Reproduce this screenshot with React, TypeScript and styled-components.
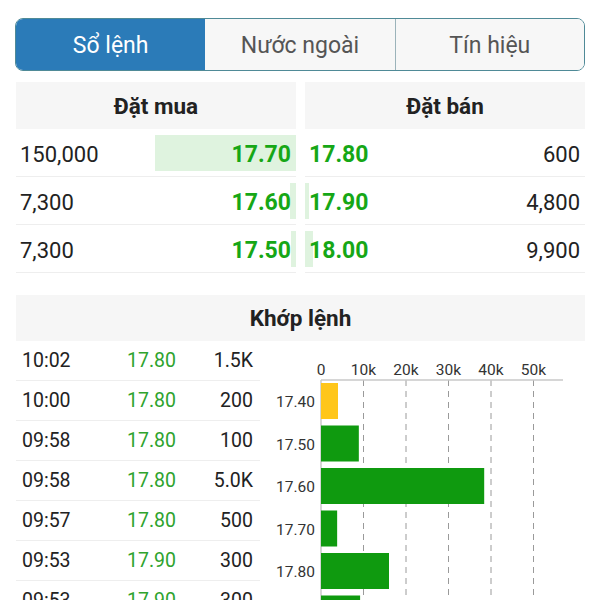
import React from 'react'
import styled, { createGlobalStyle } from 'styled-components'

const GlobalStyle = createGlobalStyle`
  body {
    margin: 0;
    background: #ffffff;
    font-family: Roboto, "Noto Sans", sans-serif;
    color: #222;
  }
`

const Page = styled.div`
  padding: 18px 15px 0 16px;
  display: flex;
  flex-direction: column;
`

const Tabs = styled.div`
  display: grid;
  grid-template-columns: repeat(3, 1fr);
  height: 53px;
  margin-left: -1px;
  border: 1.5px solid #4f8a97;
  border-radius: 8px;
  overflow: hidden;
  box-sizing: border-box;
`

const Tab = styled.div<{ $active?: boolean }>`
  display: flex;
  align-items: center;
  justify-content: center;
  padding-top: 2px;
  font-size: 23px;
  color: ${(p) => (p.$active ? '#ffffff' : '#555555')};
  background: ${(p) => (p.$active ? '#2b7bb8' : '#f7f7f7')};
  border-left: ${(p) => (p.$active ? 'none' : '1px solid #9bb3ba')};
  &:nth-child(2) {
    border-left: none;
  }
`

const Book = styled.div`
  margin-top: 11px;
  display: grid;
  grid-template-columns: 1fr 1fr;
  column-gap: 9px;
`

const Side = styled.div`
  display: flex;
  flex-direction: column;
`

const Header = styled.div`
  height: 47px;
  display: flex;
  align-items: center;
  justify-content: center;
  background: #f6f6f6;
  font-size: 22.5px;
  font-weight: 700;
  color: #222;
`

const BookRow = styled.div`
  position: relative;
  height: 48px;
  box-sizing: border-box;
  display: flex;
  align-items: center;
  justify-content: space-between;
  padding: 3px 5px 0 4px;
  border-bottom: 1px solid #eeeeee;
  font-size: 22px;
`

const DepthBar = styled.div<{ $side: 'buy' | 'sell' }>`
  position: absolute;
  top: 6px;
  bottom: 5px;
  ${(p) => (p.$side === 'buy' ? 'right: 0;' : 'left: 0;')}
  background: #dff3df;
`

const Qty = styled.span`
  position: relative;
  color: #222;
`

const BookPrice = styled.span`
  position: relative;
  color: #16a716;
  font-weight: 700;
  font-size: 23px;
`

const Matched = styled.div`
  margin-top: 22px;
  display: flex;
  flex-direction: column;
`

const MatchedHeader = styled(Header)`
  height: 46px;
`

const MatchedBody = styled.div`
  display: grid;
  grid-template-columns: 244px 1fr;
`

const Trades = styled.div`
  display: flex;
  flex-direction: column;
`

const TradeRow = styled.div`
  height: 39px;
  display: grid;
  grid-template-columns: 105px 60px 66px;
  align-items: center;
  padding-left: 6px;
  border-bottom: 1px solid #eeeeee;
  font-size: 19.5px;
  color: #222;
`

const TradePrice = styled.span`
  color: #2ea32e;
`

const TradeVol = styled.span`
  text-align: right;
`

const ChartBox = styled.div`
  height: 260px;
`

type Level = { price: string; qty: string; bar: number }

const buys: Level[] = [
  { price: '17.70', qty: '150,000', bar: 141 },
  { price: '17.60', qty: '7,300', bar: 6 },
  { price: '17.50', qty: '7,300', bar: 5 },
]

const sells: Level[] = [
  { price: '17.80', qty: '600', bar: 0 },
  { price: '17.90', qty: '4,800', bar: 4 },
  { price: '18.00', qty: '9,900', bar: 8 },
]

const trades = [
  ['10:02', '17.80', '1.5K'],
  ['10:00', '17.80', '200'],
  ['09:58', '17.80', '100'],
  ['09:58', '17.80', '5.0K'],
  ['09:57', '17.80', '500'],
  ['09:53', '17.90', '300'],
  ['09:53', '17.90', '300'],
]

const volume = [
  { price: '17.40', value: 4.0, color: '#ffc61a' },
  { price: '17.50', value: 8.9, color: '#0f9a0f' },
  { price: '17.60', value: 38.4, color: '#0f9a0f' },
  { price: '17.70', value: 3.8, color: '#0f9a0f' },
  { price: '17.80', value: 16.0, color: '#0f9a0f' },
  { price: '17.90', value: 9.2, color: '#0f9a0f' },
]

const X0 = 61
const PER_K = 4.25
const AXIS_Y = 39

const VolumeChart = () => (
  <svg width="325" height="260" viewBox="0 0 325 260">
    {[0, 10, 20, 30, 40, 50].map((k) => (
      <g key={k}>
        <text
          x={X0 + k * PER_K}
          y={34}
          textAnchor="middle"
          fontSize="15.5"
          fontFamily="Roboto, sans-serif"
          fill="#333"
        >
          {k === 0 ? '0' : `${k}k`}
        </text>
        {k > 0 ? (
          <line
            x1={X0 + k * PER_K}
            x2={X0 + k * PER_K}
            y1={AXIS_Y}
            y2={260}
            stroke="#9a9a9a"
            strokeWidth="1"
            strokeDasharray="6 5"
          />
        ) : null}
      </g>
    ))}
    <line x1={X0} x2={303} y1={AXIS_Y} y2={AXIS_Y} stroke="#c8c8c8" strokeWidth="1.5" />
    <line x1={X0} x2={X0} y1={AXIS_Y} y2={260} stroke="#c8c8c8" strokeWidth="1.5" />
    {volume.map((v, i) => {
      const top = 42 + i * 42.5
      return (
        <g key={v.price}>
          <rect x={X0} y={top} width={v.value * PER_K} height={36} fill={v.color} />
          <text
            x={55}
            y={top + 24}
            textAnchor="end"
            fontSize="15.5"
            fontFamily="Roboto, sans-serif"
            fill="#333"
          >
            {v.price}
          </text>
        </g>
      )
    })}
  </svg>
)

export default function App() {
  return (
    <>
      <GlobalStyle />
      <Page>
        <Tabs>
          <Tab $active>Sổ lệnh</Tab>
          <Tab>Nước ngoài</Tab>
          <Tab>Tín hiệu</Tab>
        </Tabs>

        <Book>
          <Side>
            <Header>Đặt mua</Header>
            {buys.map((b, i) => (
              <BookRow key={i}>
                <DepthBar $side="buy" style={{ width: b.bar }} />
                <Qty>{b.qty}</Qty>
                <BookPrice>{b.price}</BookPrice>
              </BookRow>
            ))}
          </Side>
          <Side>
            <Header>Đặt bán</Header>
            {sells.map((s, i) => (
              <BookRow key={i}>
                <DepthBar $side="sell" style={{ width: s.bar }} />
                <BookPrice>{s.price}</BookPrice>
                <Qty>{s.qty}</Qty>
              </BookRow>
            ))}
          </Side>
        </Book>

        <Matched>
          <MatchedHeader>Khớp lệnh</MatchedHeader>
          <MatchedBody>
            <Trades>
              {trades.map(([t, p, v], i) => (
                <TradeRow key={i}>
                  <span>{t}</span>
                  <TradePrice>{p}</TradePrice>
                  <TradeVol>{v}</TradeVol>
                </TradeRow>
              ))}
            </Trades>
            <ChartBox>
              <VolumeChart />
            </ChartBox>
          </MatchedBody>
        </Matched>
      </Page>
    </>
  )
}
